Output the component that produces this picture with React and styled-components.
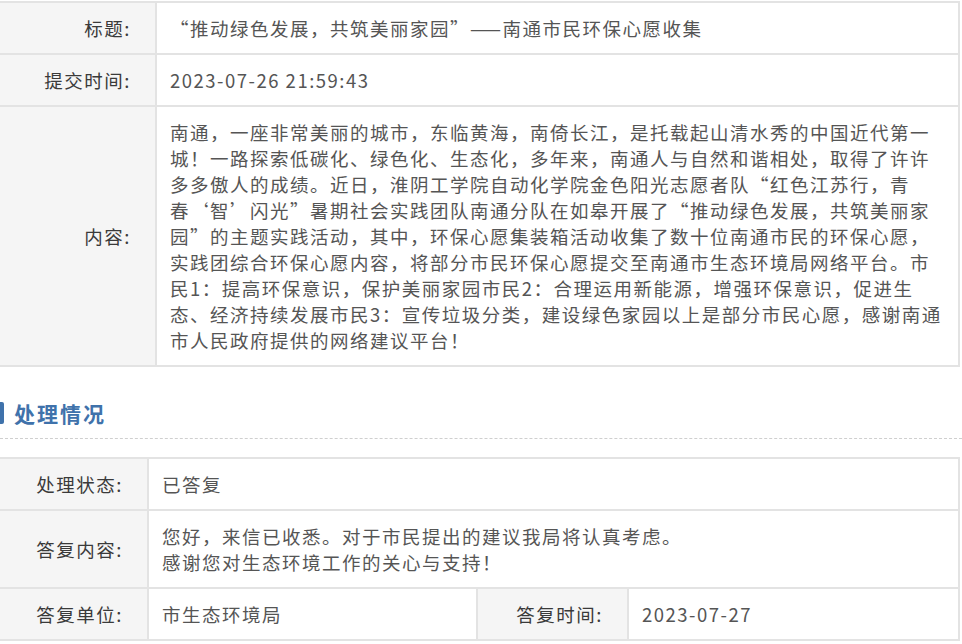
import React from "react";
import styled, { createGlobalStyle } from "styled-components";

const GlobalStyle = createGlobalStyle`
  body {
    margin: 0;
    background: #fff;
    font-family: "Noto Sans CJK SC", "Microsoft YaHei", sans-serif;
  }
`;

const Page = styled.div`
  width: 962px;
  padding-top: 1px;
`;

const Sheet = styled.div`
  display: grid;
  grid-template-columns: ${(p) => p.$cols};
  width: 960px;
  border-top: 2px solid #e3e3e3;
  font-size: 18.5px;
  letter-spacing: 1.5px;
  line-height: 26px;
`;

const Label = styled.div`
  box-sizing: border-box;
  display: flex;
  align-items: center;
  justify-content: flex-end;
  padding: 12px 24px 12px 0;
  background: #f5f5f5;
  color: #3a3a3a;
  border-right: 2px solid #e3e3e3;
  border-bottom: 2px solid #e3e3e3;
  white-space: nowrap;
`;

const Value = styled.div`
  box-sizing: border-box;
  display: flex;
  flex-direction: column;
  justify-content: center;
  padding: 12px 8px 12px 13px;
  color: #555;
  background: #fff;
  border-right: 2px solid #e3e3e3;
  border-bottom: 2px solid #e3e3e3;
  grid-column: span ${(p) => p.$span || 1};
`;

const Line = styled.span`
  display: block;
  white-space: nowrap;
`;

const Section = styled.div`
  margin-top: 33px;
  padding-bottom: 12px;
  border-bottom: 1px dashed #cfcfcf;
  margin-bottom: 18px;
`;

const Heading = styled.h2`
  display: flex;
  align-items: center;
  gap: 10px;
  margin: 0;
  font-size: 21px;
  font-weight: 700;
  letter-spacing: 2px;
  line-height: 26px;
  color: #3f72ab;

  &::before {
    content: "";
    width: 4px;
    height: 22px;
    border-radius: 0 2px 2px 0;
    background: #3f72ab;
  }
`;

const contentLines = [
  "南通，一座非常美丽的城市，东临黄海，南倚长江，是托载起山清水秀的中国近代第一",
  "城！一路探索低碳化、绿色化、生态化，多年来，南通人与自然和谐相处，取得了许许",
  "多多傲人的成绩。近日，淮阴工学院自动化学院金色阳光志愿者队“红色江苏行，青",
  "春‘智’闪光”暑期社会实践团队南通分队在如皋开展了“推动绿色发展，共筑美丽家",
  "园”的主题实践活动，其中，环保心愿集装箱活动收集了数十位南通市民的环保心愿，",
  "实践团综合环保心愿内容，将部分市民环保心愿提交至南通市生态环境局网络平台。市",
  "民1：提高环保意识，保护美丽家园市民2：合理运用新能源，增强环保意识，促进生",
  "态、经济持续发展市民3：宣传垃圾分类，建设绿色家园以上是部分市民心愿，感谢南通",
  "市人民政府提供的网络建议平台！",
];

export default function App() {
  return (
    <Page>
      <GlobalStyle />
      <Sheet $cols="157px 803px">
        <Label>标题:</Label>
        <Value>“推动绿色发展，共筑美丽家园”——南通市民环保心愿收集</Value>
        <Label>提交时间:</Label>
        <Value>2023-07-26 21:59:43</Value>
        <Label>内容:</Label>
        <Value>
          {contentLines.map((l, i) => (
            <Line key={i}>{l}</Line>
          ))}
        </Value>
      </Sheet>

      <Section>
        <Heading>处理情况</Heading>
      </Section>

      <Sheet $cols="149px 329px 151px 331px">
        <Label>处理状态:</Label>
        <Value $span={3}>已答复</Value>
        <Label>答复内容:</Label>
        <Value $span={3}>
          <Line>您好，来信已收悉。对于市民提出的建议我局将认真考虑。</Line>
          <Line>感谢您对生态环境工作的关心与支持！</Line>
        </Value>
        <Label>答复单位:</Label>
        <Value>市生态环境局</Value>
        <Label>答复时间:</Label>
        <Value>2023-07-27</Value>
      </Sheet>
    </Page>
  );
}
